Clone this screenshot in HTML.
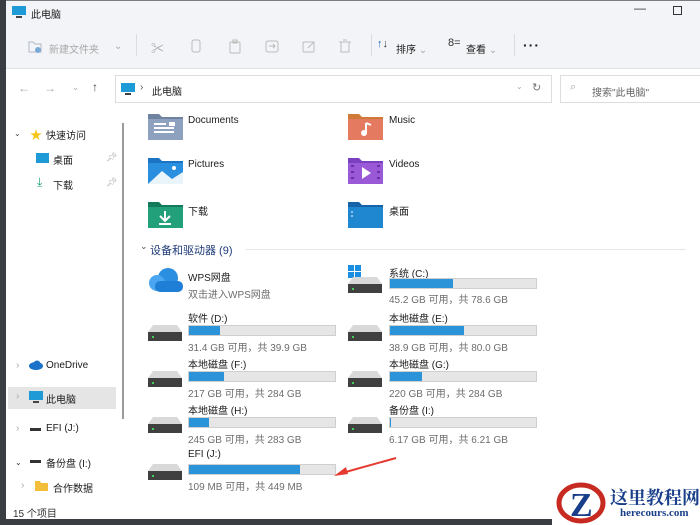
<!DOCTYPE html>
<html><head><meta charset="utf-8"><style>
*{margin:0;padding:0;box-sizing:border-box}
body{width:700px;height:525px;overflow:hidden;background:#3a3d42;font-family:"Liberation Sans","Noto Sans CJK SC",sans-serif;font-size:10px;color:#1b1b1b;position:relative}
.win{position:absolute;left:6px;top:0;width:700px;height:519px;background:#fff;border-top:1px solid #7a7d82}
.a{position:absolute;white-space:nowrap}
.top{position:absolute;left:0;top:0;width:700px;height:68px;background:#f3f4f7;border-bottom:1px solid #e3e3e3}
.gray{color:#a8a8a8}
.bar{position:absolute;width:148px;height:11px;background:#e6e6e6;border:1px solid #cfcfcf}
.bar i{display:block;height:100%;background:#2b94d9}
.sub{color:#6d6d6d}
</style></head><body>
<div class="win">
<div class="top"></div>
<svg class="a" style="left:6px;top:5px" width="14" height="12"><rect x="0" y="0" width="14" height="9" fill="#1e9ad6"/><rect x="4" y="10" width="6" height="2" fill="#444"/></svg>
<div class="a" style="left:25px;top:5px;font-size:10px">此电脑</div>
<div class="a" style="left:628px;top:0px;font-size:12px;color:#333">—</div>
<div class="a" style="left:667px;top:5px;width:9px;height:9px;border:1px solid #333"></div>
<svg class="a" style="left:22px;top:39px" width="14" height="13"><path d="M1 2h4l2 2h6v8H1z" fill="none" stroke="#b0b8c4"/><circle cx="10" cy="10" r="3" fill="#7aaad6"/></svg>
<div class="a gray" style="left:43px;top:40px">新建文件夹</div>
<div class="a gray" style="left:108px;top:40px">⌄</div>
<div class="a" style="left:130px;top:33px;width:1px;height:22px;background:#ddd"></div>
<div class="a gray" style="left:145px;top:37px;font-size:13px">✂</div>
<svg class="a" style="left:184px;top:38px" width="12" height="15"><rect x="2" y="1" width="8" height="12" rx="2" fill="none" stroke="#bbb"/></svg>
<svg class="a" style="left:222px;top:38px" width="14" height="15"><rect x="2" y="3" width="10" height="11" rx="1" fill="none" stroke="#bbb"/><rect x="5" y="1" width="4" height="3" fill="none" stroke="#bbb"/></svg>
<svg class="a" style="left:259px;top:38px" width="15" height="15"><rect x="1" y="2" width="12" height="11" rx="2" fill="none" stroke="#bbb"/><path d="M4 7h6M8 5l2 2-2 2" fill="none" stroke="#bbb"/></svg>
<svg class="a" style="left:296px;top:38px" width="15" height="15"><rect x="1" y="3" width="11" height="10" rx="1" fill="none" stroke="#bbb"/><path d="M6 9l6-6M9 3h3v3" fill="none" stroke="#bbb"/></svg>
<svg class="a" style="left:332px;top:38px" width="14" height="15"><path d="M1 3h12M3 3v10h8V3M5 1h4" fill="none" stroke="#bbb"/></svg>
<div class="a" style="left:365px;top:33px;width:1px;height:22px;background:#ddd"></div>
<div class="a" style="left:371px;top:37px;color:#1a6fc0;font-size:11px">↑<span style="color:#333">↓</span></div>
<div class="a" style="left:390px;top:40px">排序 <span class="gray">⌄</span></div>
<div class="a" style="left:442px;top:36px;font-size:11px;color:#333">8=</div>
<div class="a" style="left:460px;top:40px">查看 <span class="gray">⌄</span></div>
<div class="a" style="left:508px;top:33px;width:1px;height:22px;background:#ddd"></div>
<div class="a" style="left:517px;top:36px;font-size:14px;font-weight:bold;letter-spacing:1px">···</div>
<div class="a gray" style="left:12px;top:80px;font-size:12px">←</div>
<div class="a gray" style="left:38px;top:80px;font-size:12px">→</div>
<div class="a gray" style="left:66px;top:82px;font-size:8px">⌄</div>
<div class="a" style="left:86px;top:79px;font-size:12px;color:#444">↑</div>
<div class="a" style="left:109px;top:74px;width:437px;height:28px;border:1px solid #ddd;background:#fff"></div>
<svg class="a" style="left:115px;top:82px" width="14" height="12"><rect x="0" y="0" width="14" height="9" fill="#1e9ad6"/><rect x="4" y="10" width="6" height="2" fill="#444"/></svg>
<div class="a" style="left:134px;top:81px;color:#555">›</div>
<div class="a" style="left:146px;top:82px">此电脑</div>
<div class="a gray" style="left:510px;top:81px;font-size:8px">⌄</div>
<div class="a" style="left:526px;top:80px;color:#777;font-size:11px">↻</div>
<div class="a" style="left:554px;top:74px;width:146px;height:28px;border:1px solid #ddd;background:#fff"></div>
<div class="a gray" style="left:564px;top:80px;font-size:11px">⌕</div>
<div class="a" style="left:586px;top:83px;color:#666">搜索"此电脑"</div>
<div class="a" style="left:8px;top:128px;font-size:8px;color:#444">⌄</div>
<div class="a" style="left:24px;top:125px;color:#f5c518;font-size:12px">★</div>
<div class="a" style="left:40px;top:126px">快速访问</div>
<div class="a" style="left:30px;top:152px;width:13px;height:10px;background:#1e9ad6"></div>
<div class="a" style="left:47px;top:151px">桌面</div>
<div class="a" style="left:100px;top:151px;color:#aaa;font-size:9px">📌︎</div>
<div class="a" style="left:31px;top:174px;color:#1a9d7a;font-size:12px">⤓</div>
<div class="a" style="left:47px;top:176px">下载</div>
<div class="a" style="left:100px;top:176px;color:#aaa;font-size:9px">📌︎</div>
<div class="a" style="left:116px;top:122px;width:2px;height:296px;background:#9a9a9a"></div>
<div class="a gray" style="left:10px;top:359px">›</div>
<svg class="a" style="left:23px;top:359px" width="14" height="10"><ellipse cx="7" cy="6" rx="7" ry="4" fill="#1a73c9"/><circle cx="8" cy="4" r="3.5" fill="#1a73c9"/></svg>
<div class="a" style="left:40px;top:359px">OneDrive</div>
<div class="a" style="left:2px;top:386px;width:108px;height:22px;background:#e5e5e5"></div>
<div class="a gray" style="left:10px;top:390px">›</div>
<svg class="a" style="left:23px;top:390px" width="14" height="12"><rect x="0" y="0" width="14" height="9" fill="#1e9ad6"/><rect x="4" y="10" width="6" height="2" fill="#444"/></svg>
<div class="a" style="left:40px;top:390px">此电脑</div>
<div class="a gray" style="left:10px;top:422px">›</div>
<div class="a" style="left:24px;top:427px;width:11px;height:3px;background:#333"></div>
<div class="a" style="left:40px;top:422px">EFI (J:)</div>
<div class="a" style="left:9px;top:457px;font-size:8px;color:#333">⌄</div>
<div class="a" style="left:24px;top:459px;width:11px;height:3px;background:#333"></div>
<div class="a" style="left:40px;top:454px">备份盘 (I:)</div>
<div class="a gray" style="left:15px;top:479px">›</div>
<svg class="a" style="left:29px;top:479px" width="13" height="11"><path d="M0 1h5l1 2h7v8H0z" fill="#f2be3a"/></svg>
<div class="a" style="left:47px;top:479px">合作数据</div>
<div class="a" style="left:7px;top:504px;color:#333">15 个项目</div>
<svg class="a" style="left:142px;top:111px" width="35" height="28"><path d="M0 2h11l3 3h21v23H0z" fill="#6f83a0"/><rect x="0" y="7" width="35" height="21" fill="#8ea2bf"/><path d="M6 12h12M6 16h20M6 20h20" stroke="#fff" stroke-width="2"/><rect x="21" y="10" width="6" height="4" fill="#fff"/></svg>
<div class="a" style="left:182px;top:114px">Documents</div>
<svg class="a" style="left:342px;top:111px" width="35" height="28"><path d="M0 2h11l3 3h21v23H0z" fill="#d07a3a"/><rect x="0" y="7" width="35" height="21" fill="#e47a5f"/><path d="M18 11v10" stroke="#fff" stroke-width="2"/><circle cx="16" cy="21" r="3" fill="#fff"/><path d="M18 11l5 2" stroke="#fff" stroke-width="2"/></svg>
<div class="a" style="left:383px;top:114px">Music</div>
<svg class="a" style="left:142px;top:155px" width="35" height="28"><path d="M0 2h11l3 3h21v23H0z" fill="#1c74c4"/><rect x="0" y="7" width="35" height="21" fill="#2a8fde"/><path d="M0 28l14-13 10 8 11-7v12z" fill="#eaf4fb"/><circle cx="26" cy="12" r="2" fill="#fff"/></svg>
<div class="a" style="left:182px;top:158px">Pictures</div>
<svg class="a" style="left:342px;top:155px" width="35" height="28"><path d="M0 2h11l3 3h21v23H0z" fill="#7a40c0"/><rect x="0" y="7" width="35" height="21" fill="#9a5ad8"/><path d="M14 11l9 6-9 6z" fill="#fff"/><path d="M3 10h3M3 16h3M3 22h3M29 10h3M29 16h3M29 22h3" stroke="#6a30a8" stroke-width="2"/></svg>
<div class="a" style="left:383px;top:158px">Videos</div>
<svg class="a" style="left:142px;top:199px" width="35" height="28"><path d="M0 2h11l3 3h21v23H0z" fill="#137a5c"/><rect x="0" y="7" width="35" height="21" fill="#22a07a"/><path d="M17 11v10M12 16l5 5 5-5M11 24h12" fill="none" stroke="#fff" stroke-width="2"/></svg>
<div class="a" style="left:182px;top:202px">下载</div>
<svg class="a" style="left:342px;top:199px" width="35" height="28"><path d="M0 2h11l3 3h21v23H0z" fill="#1763a8"/><rect x="0" y="7" width="35" height="21" fill="#1f86d0"/><path d="M3 12h2M3 16h2" stroke="#fff"/></svg>
<div class="a" style="left:383px;top:202px">桌面</div>
<div class="a" style="left:134px;top:240px;color:#555;font-size:9px">⌄</div>
<div class="a" style="left:144px;top:241px;color:#1e3a78;font-size:11px">设备和驱动器 (9)</div>
<div class="a" style="left:240px;top:248px;width:440px;height:1px;background:#e6e6e6"></div>
<svg class="a" style="left:142px;top:265px" width="36" height="28"><circle cx="20" cy="12" r="10" fill="#2a8fe0"/><circle cx="9" cy="17" r="8" fill="#4aa6f0"/><rect x="7" y="15" width="28" height="11" rx="5" fill="#1f7fd6"/></svg>
<div class="a" style="left:182px;top:268px">WPS网盘</div>
<div class="a sub" style="left:182px;top:285px">双击进入WPS网盘</div>
<svg class="a" style="left:342px;top:264px" width="14" height="14"><rect x="0" y="0" width="6" height="6" fill="#1a8ee0"/><rect x="7" y="0" width="6" height="6" fill="#1a8ee0"/><rect x="0" y="7" width="6" height="6" fill="#1a8ee0"/><rect x="7" y="7" width="6" height="6" fill="#1a8ee0"/></svg>
<svg class="a" style="left:342px;top:276px" width="34" height="16"><path d="M5 0h24l5 7H0z" fill="#d9d9d9"/><rect x="0" y="7" width="34" height="9" fill="#404040"/><rect x="4" y="11" width="2" height="2" fill="#3cd35a"/></svg>
<div class="a" style="left:383px;top:264px">系统 (C:)</div>
<div class="bar" style="left:383px;top:277px"><i style="width:43%"></i></div>
<div class="a sub" style="left:383px;top:290px">45.2 GB 可用，共 78.6 GB</div>
</div>
<div id="drives"></div>
<script>
var d=[["软件 (D:)",21,"31.4 GB 可用，共 39.9 GB",0,316],["本地磁盘 (E:)",51,"38.9 GB 可用，共 80.0 GB",1,316],["本地磁盘 (F:)",24,"217 GB 可用，共 284 GB",0,362],["本地磁盘 (G:)",22,"220 GB 可用，共 284 GB",1,362],["本地磁盘 (H:)",14,"245 GB 可用，共 283 GB",0,408],["备份盘 (I:)",1,"6.17 GB 可用，共 6.21 GB",1,408],["EFI (J:)",76,"109 MB 可用，共 449 MB",0,455]];
var h="";d.forEach(function(r){var x=r[3]?389:188,ix=r[3]?348:148,y=r[4];
h+='<div class="a" style="left:'+x+'px;top:'+(y-6)+'px">'+r[0]+'</div>';
h+='<div class="bar" style="left:'+x+'px;top:'+(y+9)+'px"><i style="width:'+r[1]+'%"></i></div>';
h+='<div class="a sub" style="left:'+x+'px;top:'+(y+23)+'px">'+r[2]+'</div>';
h+='<svg class="a" style="left:'+ix+'px;top:'+(y+9)+'px" width="34" height="16"><path d="M5 0h24l5 7H0z" fill="#d9d9d9"/><rect x="0" y="7" width="34" height="9" fill="#404040"/><rect x="4" y="11" width="2" height="2" fill="#3cd35a"/></svg>';});
document.getElementById("drives").innerHTML=h;
</script>
<svg class="a" style="left:330px;top:455px" width="70" height="25"><path d="M66 3L12 18" stroke="#e53a2f" stroke-width="2"/><path d="M4 21l12-9 2 7z" fill="#e53a2f"/></svg>
<div class="a" style="left:552px;top:482px;width:148px;height:43px;background:#fff"></div>
<svg class="a" style="left:556px;top:482px" width="52" height="43"><ellipse cx="25" cy="21" rx="22" ry="18" fill="none" stroke="#c72a20" stroke-width="5"/><text x="14" y="34" font-family="Liberation Serif" font-weight="bold" font-size="34" fill="#1a3f8a">Z</text></svg>
<div class="a" style="left:610px;top:484px;font-family:'Liberation Serif','Noto Serif CJK SC',serif;font-weight:bold;font-size:18px;color:#1a3f8a">这里教程网</div>
<div class="a" style="left:620px;top:507px;font-family:'Liberation Serif',serif;font-weight:bold;font-size:11px;color:#1a3f8a">herecours.com</div>
</body></html>
